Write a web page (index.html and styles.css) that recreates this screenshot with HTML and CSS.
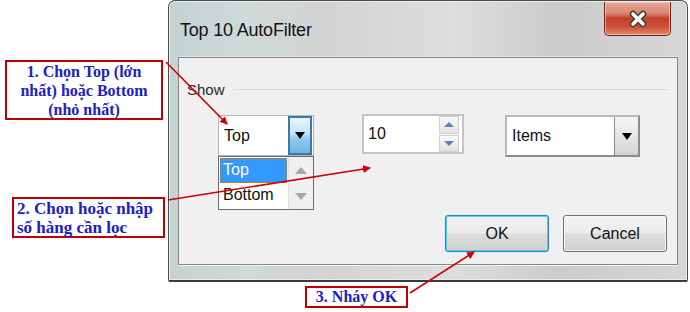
FILE: index.html
```html
<!DOCTYPE html>
<html lang="vi">

<head>
    <title>Top 10 AutoFilter</title>
    <meta charset="utf-8">
    <meta name="viewport" content="width=device-width, initial-scale=1.0">
    <link rel="stylesheet" href="styles.css">
</head>

<body>

<main class="stage">

    <section class="window">
        <header class="titlebar">
            <h1 class="title">Top 10 AutoFilter</h1>
            <button class="close" aria-label="Close">
                <svg width="22" height="18" viewBox="0 0 22 18">
                    <path d="M6 4 L16 14 M16 4 L6 14" stroke="#3a3a3a" stroke-width="6.5" stroke-linecap="round"/>
                    <path d="M6 4 L16 14 M16 4 L6 14" stroke="#ffffff" stroke-width="3.6" stroke-linecap="round"/>
                </svg>
            </button>
        </header>

        <div class="client">
            <div class="legend">
                <span>Show</span>
                <span class="rule"></span>
            </div>

            <div class="controls">
                <div class="combo combo-top">
                    <span class="field">Top</span>
                    <span class="drop drop-blue"><i class="tri"></i></span>

                    <ul class="droplist">
                        <li class="valgt"><span>Top</span></li>
                        <li><span>Bottom</span></li>
                        <li class="scroll">
                            <i class="tri-up"></i>
                            <i class="tri-down"></i>
                        </li>
                    </ul>
                </div>

                <div class="spin">
                    <span class="field">10</span>
                    <span class="spinbtns">
                        <span class="sbtn"><i class="stri-up"></i></span>
                        <span class="sbtn"><i class="stri-down"></i></span>
                    </span>
                </div>

                <div class="combo combo-items">
                    <span class="field">Items</span>
                    <span class="drop drop-gray"><i class="tri"></i></span>
                </div>
            </div>

            <div class="buttons">
                <button class="knap knap-ok">OK</button>
                <button class="knap">Cancel</button>
            </div>
        </div>
    </section>

    <!-- annotations -->
    <p class="note note1">1. Chọn Top (lớn nhất) hoặc Bottom (nhỏ nhất)</p>
    <p class="note note2">2. Chọn hoặc nhập<br>số hàng cần lọc</p>
    <p class="note note3">3. Nháy OK</p>

    <svg class="arrows" width="690" height="312" viewBox="0 0 690 312">
        <defs>
            <marker id="pil" markerWidth="8" markerHeight="8" refX="7" refY="4" orient="auto" markerUnits="userSpaceOnUse">
                <path d="M0 0 L8 4 L0 8 Z" fill="#d20000"/>
            </marker>
        </defs>
        <line x1="166" y1="62" x2="227" y2="124" stroke="#d20000" stroke-width="1.6" marker-end="url(#pil)"/>
        <line x1="168" y1="200" x2="370" y2="168" stroke="#d20000" stroke-width="1.6" marker-end="url(#pil)"/>
        <line x1="410" y1="293" x2="474" y2="252" stroke="#d20000" stroke-width="1.6" marker-end="url(#pil)"/>
    </svg>

</main>

</body>

</html>
```

FILE: styles.css
```css
body {
    margin: 0;
    background-color: #ffffff;
}

.stage {
    position: relative;
    width: 690px;
    height: 312px;
    overflow: hidden;
}

/* dialog window */

.window {
    margin-left: 168px;
    width: 520px;
    height: 282px;
    box-sizing: border-box;
    border: 1px solid #4c4c4c;
    border-bottom: 2px solid #3a3a3a;
    border-radius: 7px 7px 2px 2px;
    padding: 0 9px;
    background: linear-gradient(90deg, #c3d3d2 0%, #cfdad9 15%, #d3d3d3 30%, #dedede 55%, #cbcbcb 75%, #d6d6d6 100%);
    box-shadow: inset 0 0 0 1px #ececec;
    font-family: "Liberation Sans", Arial, sans-serif;
}

.titlebar {
    height: 56px;
    display: flex;
    justify-content: space-between;
    align-items: flex-start;
}

.title {
    margin: 19px 0 0 2px;
    font-size: 18px;
    font-weight: normal;
    color: #111111;
    letter-spacing: -0.2px;
}

.close {
    margin: 1px 7px 0 0;
    width: 67px;
    height: 34px;
    border: 1px solid #6e2418;
    border-top: none;
    border-radius: 0 0 5px 5px;
    background: linear-gradient(#e9aa9a 0%, #d98470 35%, #c4412a 50%, #cc5136 75%, #e08a70 100%);
    box-shadow: inset 0 0 0 1px rgba(255, 220, 210, 0.6);
    display: flex;
    align-items: center;
    justify-content: center;
    padding: 0;
}

.client {
    height: 208px;
    box-sizing: border-box;
    border: 1px solid #868686;
    background-color: #f0f0f0;
    padding: 22px 9px 0 8px;
    box-shadow: 0 1px 0 #f4f4f4, 0 -1px 0 #e6e6e6;
}

.legend {
    display: flex;
    align-items: center;
    gap: 8px;
    height: 18px;
    font-size: 15px;
    color: #2a2a2a;
}

.rule {
    flex: 1;
    height: 1px;
    background-color: #d2dde6;
    margin-top: 1px;
}

.controls {
    display: flex;
    align-items: flex-start;
    margin: 17px 0 0 31px;
    height: 42px;
}

.field {
    flex: 1;
    padding-left: 5px;
    font-size: 16px;
    color: #111111;
    align-self: center;
}

.combo {
    position: relative;
    display: flex;
    box-sizing: border-box;
    background-color: #ffffff;
}

.combo-top {
    width: 96px;
    height: 41px;
    border: 1px solid #b4b4b4;
}

.combo-items {
    margin-left: 41px;
    width: 135px;
    height: 42px;
    border: 2px solid #8c8c8c;
    border-left-color: #b8b8b8;
    border-top-color: #b8b8b8;
}

.drop {
    width: 24px;
    box-sizing: border-box;
    display: flex;
    align-items: center;
    justify-content: center;
}

.drop-blue {
    border: 2px solid #3b78a6;
    background: linear-gradient(#eaf6fd 0%, #bfe3f7 45%, #8ccbee 60%, #6fb6e2 100%);
    margin-right: 1px;
}

.drop-gray {
    border-left: 1px solid #8a8a8a;
    background: linear-gradient(#f6f6f6 0%, #e6e6e6 50%, #d2d2d2 100%);
}

.tri {
    width: 0;
    height: 0;
    border-left: 5px solid transparent;
    border-right: 5px solid transparent;
    border-top: 7px solid #000000;
}

/* dropdown popup */

.droplist {
    position: absolute;
    left: -1px;
    top: 40px;
    width: 96px;
    height: 54px;
    box-sizing: border-box;
    margin: 0;
    padding: 1px 26px 0 1px;
    list-style: none;
    border: 1px solid #6c6c6c;
    background-color: #ffffff;
    font-size: 16px;
}

.droplist li {
    height: 25px;
    line-height: 24px;
    padding-left: 3px;
    color: #111111;
}

.droplist .valgt {
    background-color: #3399ff;
    color: #ffffff;
    outline: 1px dotted #b07830;
    outline-offset: -1px;
}

.droplist .scroll {
    position: absolute;
    right: 0;
    top: 0;
    width: 24px;
    height: 52px;
    padding: 0;
    background-color: #f0f0f0;
    border-left: 1px solid #e0e0e0;
    display: flex;
    flex-direction: column;
    align-items: center;
    justify-content: space-around;
}

.tri-up, .tri-down {
    width: 0;
    height: 0;
    border-left: 6px solid transparent;
    border-right: 6px solid transparent;
}

.tri-up {
    border-bottom: 7px solid #a6a6a6;
}

.tri-down {
    border-top: 7px solid #a6a6a6;
}

/* spinner */

.spin {
    margin: -1px 0 0 48px;
    width: 102px;
    height: 40px;
    box-sizing: border-box;
    border: 2px solid #c4c4c4;
    background-color: #ffffff;
    display: flex;
}

.spin .field {
    padding-left: 4px;
}

.spinbtns {
    display: flex;
    flex-direction: column;
    gap: 1px;
    width: 20px;
    margin: 0 3px 0 0;
}

.sbtn {
    flex: 1;
    box-sizing: border-box;
    border: 1px solid #d0d0d0;
    background: linear-gradient(#f8f8f8, #e4e4e4);
    display: flex;
    align-items: center;
    justify-content: center;
}

.stri-up, .stri-down {
    width: 0;
    height: 0;
    border-left: 5px solid transparent;
    border-right: 5px solid transparent;
}

.stri-up {
    border-bottom: 5px solid #5b7fc2;
}

.stri-down {
    border-top: 5px solid #5b7fc2;
}

/* buttons */

.buttons {
    display: flex;
    justify-content: flex-end;
    gap: 14px;
    margin: 58px 1px 0 0;
}

.knap {
    width: 104px;
    height: 37px;
    border: 1px solid #707070;
    border-radius: 3px;
    background: linear-gradient(#f3f3f3 0%, #ebebeb 48%, #dddddd 52%, #cfcfcf 100%);
    box-shadow: inset 0 0 0 1px #f8f8f8;
    font-family: "Liberation Sans", Arial, sans-serif;
    font-size: 16px;
    color: #111111;
    padding: 0;
}

.knap-ok {
    border-color: #3c7fb1;
    box-shadow: inset 0 0 0 1px #48d1ff, 0 0 1px #48d1ff;
}

/* annotations over the picture */

.note {
    position: absolute;
    margin: 0;
    box-sizing: border-box;
    border: 2px solid #c00000;
    background-color: #ffffff;
    color: #2020c8;
    font-family: "Liberation Serif", "Times New Roman", serif;
    font-weight: bold;
    font-size: 16px;
    line-height: 19px;
}

.note1 {
    left: 5px;
    top: 60px;
    width: 158px;
    height: 60px;
    padding: 0 4px;
    text-align: center;
}

.note2 {
    left: 12px;
    top: 197px;
    width: 153px;
    height: 41px;
    padding: 0 3px;
    font-size: 17px;
}

.note3 {
    left: 305px;
    top: 286px;
    width: 103px;
    height: 22px;
    padding: 0;
    text-align: center;
    line-height: 18px;
}

.arrows {
    position: absolute;
    left: 0;
    top: 0;
    pointer-events: none;
}
```
